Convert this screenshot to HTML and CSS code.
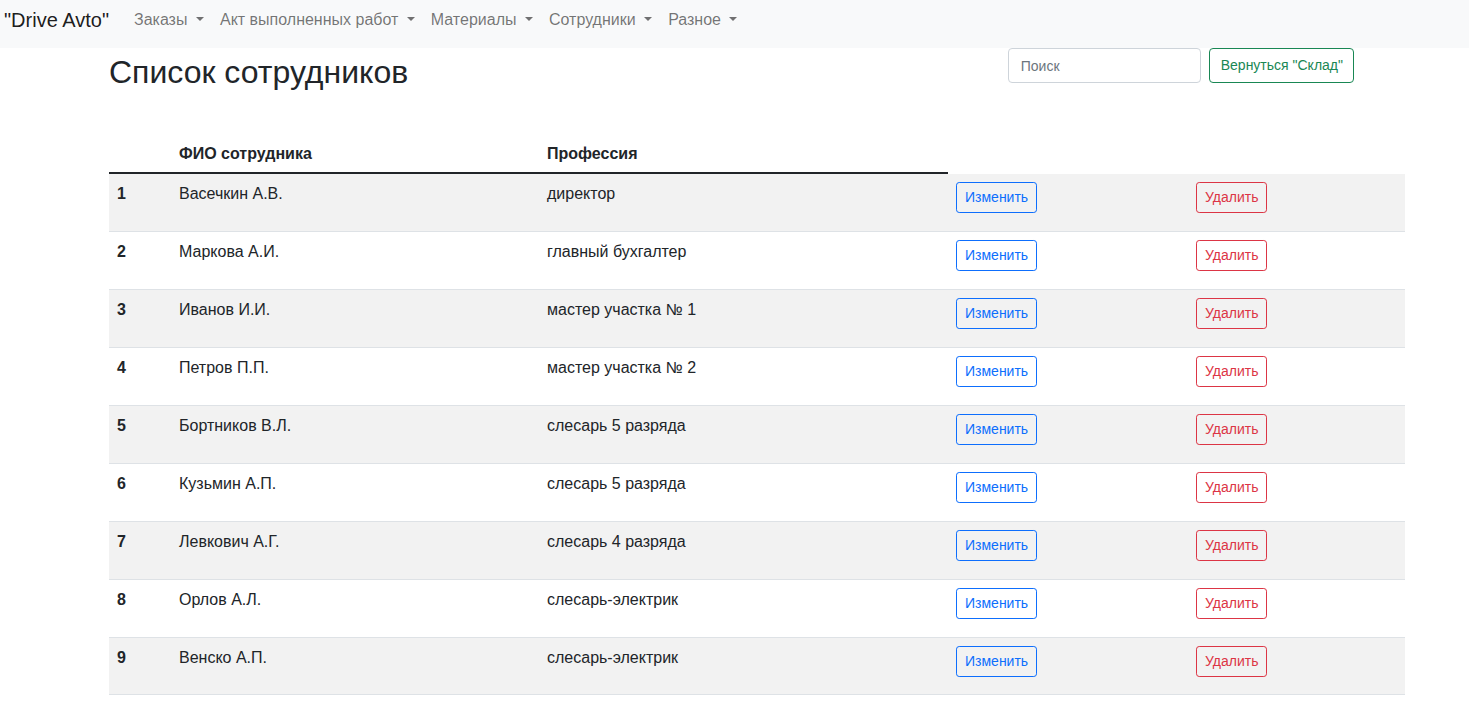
FILE: index.html
```html
<!DOCTYPE html>
<html lang="ru">
<head>
<meta charset="utf-8">
<title>Список сотрудников</title>
<link rel="stylesheet" href="styles.css">
</head>
<body>
<nav class="navbar">
  <a class="brand" href="#">"Drive Avto"</a>
  <ul class="nav">
    <li><a class="nav-link dropdown" href="#">Заказы</a></li>
    <li><a class="nav-link dropdown" href="#">Акт выполненных работ</a></li>
    <li><a class="nav-link dropdown" href="#">Материалы</a></li>
    <li><a class="nav-link dropdown" href="#">Сотрудники</a></li>
    <li><a class="nav-link dropdown" href="#">Разное</a></li>
  </ul>
</nav>
<main class="page">
  <div class="top-row">
    <h2 class="title">Список сотрудников</h2>
    <form class="search-form">
      <input class="search-input" type="text" placeholder="Поиск">
      <a class="btn btn-success" href="#">Вернуться "Склад"</a>
    </form>
  </div>
  <table class="staff-table">
    <colgroup>
      <col class="c-num"><col class="c-name"><col class="c-prof"><col class="c-edit"><col class="c-del">
    </colgroup>
    <thead>
      <tr>
        <th class="head-cell"></th>
        <th class="head-cell">ФИО сотрудника</th>
        <th class="head-cell">Профессия</th>
      </tr>
    </thead>
    <tbody>
      <tr class="odd"><th class="cell num">1</th><td class="cell">Васечкин А.В.</td><td class="cell">директор</td><td class="cell"><a class="btn btn-sm btn-primary" href="#">Изменить</a></td><td class="cell"><a class="btn btn-sm btn-danger" href="#">Удалить</a></td></tr>
      <tr><th class="cell num">2</th><td class="cell">Маркова А.И.</td><td class="cell">главный бухгалтер</td><td class="cell"><a class="btn btn-sm btn-primary" href="#">Изменить</a></td><td class="cell"><a class="btn btn-sm btn-danger" href="#">Удалить</a></td></tr>
      <tr class="odd"><th class="cell num">3</th><td class="cell">Иванов И.И.</td><td class="cell">мастер участка № 1</td><td class="cell"><a class="btn btn-sm btn-primary" href="#">Изменить</a></td><td class="cell"><a class="btn btn-sm btn-danger" href="#">Удалить</a></td></tr>
      <tr><th class="cell num">4</th><td class="cell">Петров П.П.</td><td class="cell">мастер участка № 2</td><td class="cell"><a class="btn btn-sm btn-primary" href="#">Изменить</a></td><td class="cell"><a class="btn btn-sm btn-danger" href="#">Удалить</a></td></tr>
      <tr class="odd"><th class="cell num">5</th><td class="cell">Бортников В.Л.</td><td class="cell">слесарь 5 разряда</td><td class="cell"><a class="btn btn-sm btn-primary" href="#">Изменить</a></td><td class="cell"><a class="btn btn-sm btn-danger" href="#">Удалить</a></td></tr>
      <tr><th class="cell num">6</th><td class="cell">Кузьмин А.П.</td><td class="cell">слесарь 5 разряда</td><td class="cell"><a class="btn btn-sm btn-primary" href="#">Изменить</a></td><td class="cell"><a class="btn btn-sm btn-danger" href="#">Удалить</a></td></tr>
      <tr class="odd"><th class="cell num">7</th><td class="cell">Левкович А.Г.</td><td class="cell">слесарь 4 разряда</td><td class="cell"><a class="btn btn-sm btn-primary" href="#">Изменить</a></td><td class="cell"><a class="btn btn-sm btn-danger" href="#">Удалить</a></td></tr>
      <tr><th class="cell num">8</th><td class="cell">Орлов А.Л.</td><td class="cell">слесарь-электрик</td><td class="cell"><a class="btn btn-sm btn-primary" href="#">Изменить</a></td><td class="cell"><a class="btn btn-sm btn-danger" href="#">Удалить</a></td></tr>
      <tr class="odd last"><th class="cell num">9</th><td class="cell">Венско А.П.</td><td class="cell">слесарь-электрик</td><td class="cell"><a class="btn btn-sm btn-primary" href="#">Изменить</a></td><td class="cell"><a class="btn btn-sm btn-danger" href="#">Удалить</a></td></tr>
    </tbody>
  </table>
</main>
</body>
</html>
```
FILE: styles.css
```css
* { box-sizing: border-box; }
html, body {
  margin: 0;
  padding: 0;
  background: #fff;
  font-family: "Liberation Sans", Arial, sans-serif;
  font-size: 16px;
  line-height: 1.5;
  color: #212529;
}
a { text-decoration: none; }

.navbar {
  display: flex;
  align-items: flex-start;
  height: 48px;
  padding: 8px 4px;
  background: #f8f9fa;
}
.brand {
  font-size: 20px;
  line-height: 24px;
  color: rgba(0, 0, 0, 0.9);
  margin-right: 17px;
  white-space: nowrap;
}
.nav {
  display: flex;
  list-style: none;
  margin: 0;
  padding: 0;
}
.nav-link {
  display: block;
  padding: 0 8px;
  line-height: 24px;
  color: rgba(0, 0, 0, 0.55);
  white-space: nowrap;
}
.dropdown::after {
  content: "";
  display: inline-block;
  margin-left: 8.5px;
  vertical-align: 0.255em;
  border-top: 0.3em solid;
  border-right: 0.3em solid transparent;
  border-left: 0.3em solid transparent;
  border-bottom: 0;
}

.page {
  width: 1405px;
  padding-left: 109px;
}
.top-row {
  display: flex;
  align-items: flex-start;
  height: 84px;
}
.title {
  margin: 5px 0 0 0;
  font-size: 32px;
  font-weight: 400;
  line-height: 1.2;
}
.search-form {
  display: flex;
  gap: 8px;
  margin-left: auto;
  margin-right: 51px;
}
.search-input {
  width: 193px;
  height: 35px;
  padding: 6px 12px;
  font-family: inherit;
  font-size: 14px;
  line-height: 21px;
  color: #212529;
  border: 1px solid #ced4da;
  border-radius: 4px;
  background: #fff;
}
.search-input::placeholder { color: #6c757d; }

.btn {
  display: inline-block;
  border: 1px solid;
  border-radius: 4px;
  background: transparent;
  padding: 6px 10px 6px 11px;
  font-size: 14px;
  line-height: 21px;
  white-space: nowrap;
}
.btn-sm {
  padding: 4px 8px;
  border-radius: 3.2px;
}
.btn-success { color: #198754; border-color: #198754; }
.btn-primary { color: #0d6efd; border-color: #0d6efd; }
.btn-danger { color: #dc3545; border-color: #dc3545; }

.staff-table {
  width: 1296px;
  table-layout: fixed;
  border-collapse: separate;
  border-spacing: 0;
}
.c-num { width: 62px; }
.c-name { width: 368px; }
.c-prof { width: 409px; }
.c-edit { width: 240px; }
.c-del { width: 217px; }

.head-cell {
  padding: 8px 8px 6px;
  height: 42px;
  text-align: left;
  vertical-align: bottom;
  font-weight: 700;
  border-bottom: 2px solid #212529;
}
.cell {
  padding: 8px;
  height: 58px;
  text-align: left;
  vertical-align: top;
  font-weight: 400;
  border-top: 1px solid #dee2e6;
}
.staff-table tbody tr:first-child .cell { border-top: 0; height: 57px; }
.cell.num { font-weight: 700; }
.odd .cell { background: #f2f2f2; }
.last .cell { border-bottom: 1px solid #dee2e6; }
```
